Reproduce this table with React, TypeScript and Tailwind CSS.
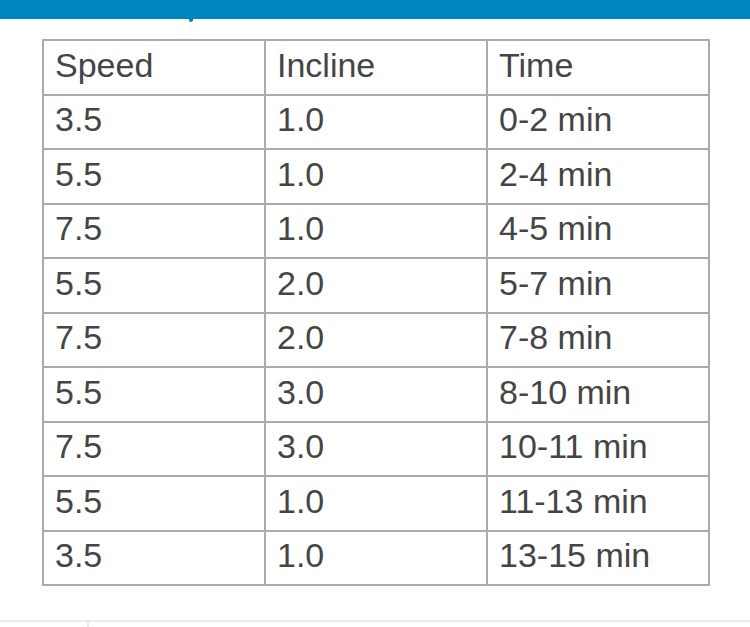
const ROWS = [
  ["3.5", "1.0", "0-2 min"],
  ["5.5", "1.0", "2-4 min"],
  ["7.5", "1.0", "4-5 min"],
  ["5.5", "2.0", "5-7 min"],
  ["7.5", "2.0", "7-8 min"],
  ["5.5", "3.0", "8-10 min"],
  ["7.5", "3.0", "10-11 min"],
  ["5.5", "1.0", "11-13 min"],
  ["3.5", "1.0", "13-15 min"],
];

const Cell = ({ children }: { children: string }) => (
  <td className="h-[54.5px] w-[222px] border-2 border-[#ababab] pl-[11px] pb-[5px] align-middle leading-none">
    {children}
  </td>
);

export default function App() {
  return (
    <div className="flex h-[627px] w-[750px] flex-col bg-white font-['Liberation_Sans',Arial,sans-serif] text-[34px] text-[#454545]">
      <div className="h-[19px] w-full bg-[#0085bf]" />
      <div className="ml-[189px] h-[3px] w-[4px] rounded-b-sm bg-[#0085bf]" />
      <div className="pl-[42px] pt-[17px]">
        <table className="border-collapse">
          <thead>
            <tr>
              <Cell>Speed</Cell>
              <Cell>Incline</Cell>
              <Cell>Time</Cell>
            </tr>
          </thead>
          <tbody>
            {ROWS.map((row, i) => (
              <tr key={i}>
                {row.map((v, j) => (
                  <Cell key={j}>{v}</Cell>
                ))}
              </tr>
            ))}
          </tbody>
        </table>
      </div>
      <div className="mt-auto flex h-[7px] border-t-2 border-[#ebeded]">
        <div className="w-[89px] border-r-2 border-[#ebeded]" />
      </div>
    </div>
  );
}
